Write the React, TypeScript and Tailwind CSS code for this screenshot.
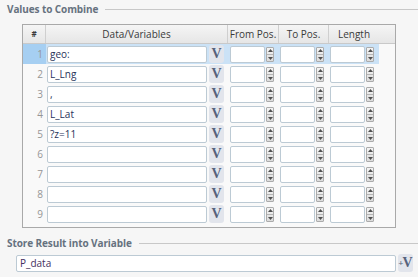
import React from 'react';

const rows = ['geo:', 'L_Lng', ',', 'L_Lat', '?z=11', '', '', '', ''];

function VButton({ plus = false }: { plus?: boolean }) {
  return (
    <div className="w-[15px] h-[18px] rounded-[3px] bg-[#e2e5ec] flex items-center justify-center">
      <span className="text-[14px] font-bold leading-none text-[#56627b]" style={{ fontFamily: '"Liberation Serif", serif' }}>
        {plus ? (
          <span className="flex items-center">
            <span className="text-[9px] -mr-[1px]">+</span>V
          </span>
        ) : (
          'V'
        )}
      </span>
    </div>
  );
}

function Spinner() {
  return (
    <div className="w-[8px] h-[15px] border border-[#ababab] rounded-[1px] bg-gradient-to-b from-[#f4f4f4] to-[#dcdcdc] flex flex-col items-center justify-center gap-[2px]">
      <svg width="5" height="3" viewBox="0 0 5 3">
        <path d="M0 3 L2.5 0 L5 3 Z" fill="#505050" />
      </svg>
      <div className="w-[6px] h-px bg-[#b5b5b5]" />
      <svg width="5" height="3" viewBox="0 0 5 3">
        <path d="M0 0 L2.5 3 L5 0 Z" fill="#505050" />
      </svg>
    </div>
  );
}

function NumField() {
  return (
    <div className="flex items-center gap-px">
      <div className="w-[35px] h-[17px] bg-white border border-[#bccad4] rounded-[2px]" />
      <Spinner />
    </div>
  );
}

function SectionTitle({ children }: { children: React.ReactNode }) {
  return (
    <div className="flex items-center pl-[7px] h-[16px]">
      <span className="text-[10px] font-bold text-[#66727f] tracking-[-0.1px]">{children}</span>
      <div className="flex-1 h-px bg-[#c8c8c8] ml-[7px]" />
    </div>
  );
}

export default function App() {
  return (
    <div
      className="w-[418px] h-[277px] bg-[#f6f6f6] overflow-hidden pt-[1px]"
      style={{ fontFamily: '"Open Sans", "Noto Sans", sans-serif' }}
    >
      <SectionTitle>Values to Combine</SectionTitle>

      {/* Table */}
      <div className="ml-[22px] mt-[7px] w-[374px] border border-[#a9a9a9] bg-[#f9f9f9] pb-[3px]">
        <div className="flex h-[19px] bg-gradient-to-b from-[#f5f5f5] to-[#e6e6e6] border-b border-[#c9c9c9] text-[10px] text-[#3a3a3a]">
          <div className="w-[23px] flex items-center justify-center border-r border-[#cfcfcf] font-bold text-[8px]">#</div>
          <div className="w-[182px] flex items-center justify-center border-r border-[#cfcfcf]">Data/Variables</div>
          <div className="w-[51px] flex items-center justify-center border-r border-[#cfcfcf]">From Pos.</div>
          <div className="w-[50px] flex items-center justify-center border-r border-[#cfcfcf]">To Pos.</div>
          <div className="w-[50px] flex items-center justify-center">Length</div>
          <div className="flex-1" />
        </div>

        {rows.map((value, i) => (
          <div key={i} className="flex h-[20px] items-center">
            <div
              className={
                'w-[23px] h-full flex items-center justify-end pr-[3px] text-[10px] text-[#969696] ' +
                (i === 0 ? 'bg-[#a6cff2]' : '')
              }
            >
              {i + 1}
            </div>
            <div className={'flex items-center h-full w-[333px] ' + (i === 0 ? 'bg-[#cbe2f6]' : '')}>
              <div className="w-[160px] h-[17px] bg-white border border-[#bccad4] rounded-[2px] ml-[1px] flex items-center pl-[2px] text-[10px] text-[#28325a]">
                {value}
              </div>
              <div className="ml-[2px]">
                <VButton />
              </div>
              <div className="ml-[6px]">
                <NumField />
              </div>
              <div className="ml-[6px]">
                <NumField />
              </div>
              <div className="ml-[6px]">
                <NumField />
              </div>
            </div>
          </div>
        ))}
      </div>

      <div className="mt-[7px]">
        <SectionTitle>Store Result into Variable</SectionTitle>
      </div>

      <div className="flex items-center ml-[16px] mt-[3px] gap-[2px]">
        <div className="w-[380px] h-[17px] bg-white border border-[#bccad4] rounded-[2px] flex items-center pl-[3px] text-[10px] text-[#44305e]">
          P_data
        </div>
        <VButton plus />
      </div>
    </div>
  );
}
